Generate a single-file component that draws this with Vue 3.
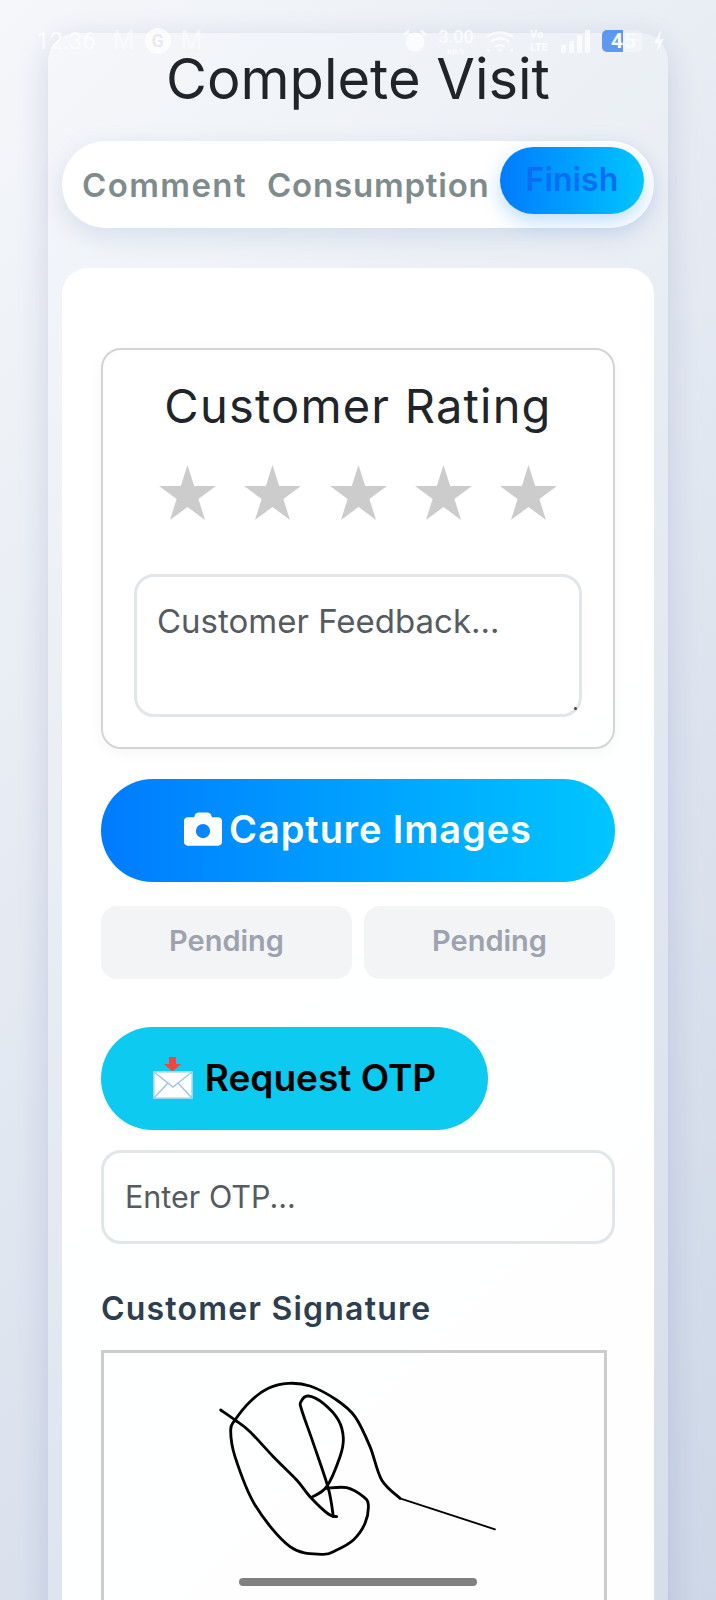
<script setup>
const stars = [1, 2, 3, 4, 5]

const smooth = (pts) => {
  let d = `M${pts[0][0]} ${pts[0][1]}`
  for (let i = 0; i < pts.length - 1; i++) {
    const p0 = pts[i - 1] || pts[i]
    const p1 = pts[i]
    const p2 = pts[i + 1]
    const p3 = pts[i + 2] || p2
    const c1x = p1[0] + (p2[0] - p0[0]) / 6
    const c1y = p1[1] + (p2[1] - p0[1]) / 6
    const c2x = p2[0] - (p3[0] - p1[0]) / 6
    const c2y = p2[1] - (p3[1] - p1[1]) / 6
    d += `C${c1x} ${c1y} ${c2x} ${c2y} ${p2[0]} ${p2[1]}`
  }
  return d
}

const strokes = [
  [[62, 150], [105, 180], [150, 215], [220, 290], [290, 360], [330, 410], [385, 462], [410, 470]],
  [[400, 470], [385, 385], [340, 250], [305, 150], [303, 125], [325, 108], [370, 130], [415, 180], [430, 235], [420, 290], [380, 380], [335, 412]],
  [[380, 385], [440, 383], [490, 410], [505, 435], [495, 490], [460, 540], [410, 570], [365, 583], [270, 560], [165, 435], [105, 290], [92, 210], [105, 180], [150, 125], [205, 85], [265, 70], [330, 78], [410, 120], [465, 170], [510, 260], [545, 360], [600, 415]],
].map(smooth)
</script>

<template>
  <div class="page">
    <div class="status">
      <div class="status-left">
        <span class="time">12:36</span>
        <span class="mail">M</span>
        <span class="g">G</span>
        <span class="mail">M</span>
      </div>
      <div class="status-right">
        <svg class="alarm" viewBox="0 0 24 24" width="24" height="24"><circle cx="12" cy="13" r="9.500" fill="#fff"/><path d="M1 6l5-4.500M23 6l-5-4.500" stroke="#fff" stroke-width="2.400"/></svg>
        <span class="speed"><b>3.00</b><i>KB/S</i></span>
        <svg class="wifi" viewBox="0 0 32 24" width="30" height="24" fill="none" stroke="#fff" stroke-width="2.400"><path d="M2 8c8-7 20-7 28 0M6 13c6-5 14-5 20 0M11 18c3-2 7-2 10 0"/><path d="M2 22h3M14 22h4M27 22h3"/></svg>
        <span class="volte"><b>Vo</b><b>LTE</b></span>
        <span class="signal"><i class="s1"></i><i class="s2"></i><i class="s3"></i><i class="s4"></i></span>
        <span class="battery"><span class="level">4</span><span class="rest">5</span></span>
        <svg class="bolt" viewBox="0 0 12 24" width="14" height="24"><path d="M8 1L1 14h4l-1 9 7-13H7z" fill="#fff"/></svg>
      </div>
    </div>

    <div class="shell">
      <h1 class="title">Complete Visit</h1>
      <nav class="tabs">
        <span class="tab tab-comment">Comment</span>
        <span class="tab tab-consumption">Consumption</span>
        <span class="tab-active">Finish</span>
      </nav>

      <main class="panel">
        <section class="rating">
          <h2>Customer Rating</h2>
          <div class="stars">
            <svg v-for="s in stars" :key="s" viewBox="0 0 57 55" width="57" height="55">
              <polygon points="28.5,0 35.2,21 57,21 39.4,34 46,55 28.5,42 11,55 17.6,34 0,21 21.8,21" fill="#ccc"/>
            </svg>
          </div>
          <div class="feedback">Customer Feedback...<span class="grip"></span></div>
        </section>

        <button class="capture">
          <svg viewBox="0 0 512 512" width="38" height="38"><path fill="#fff" d="M512 144v288c0 26.5-21.5 48-48 48H48c-26.5 0-48-21.5-48-48V144c0-26.5 21.5-48 48-48h88l12.3-32.9c7-18.7 24.9-31.1 44.9-31.1h125.5c20 0 37.9 12.4 44.9 31.1L376 96h88c26.5 0 48 21.5 48 48z"/><circle cx="256" cy="284" r="96" fill="#0a84ff"/></svg>
          <span>Capture Images</span>
        </button>

        <div class="pending">
          <div>Pending</div>
          <div>Pending</div>
        </div>

        <button class="otp">
          <svg viewBox="0 0 40 42" width="40" height="42">
            <path d="M16 0h7v7h5l-8.500 7.500L11 7h5z" fill="#f0473c"/>
            <rect x="1" y="15" width="38" height="26" fill="#fff" stroke="#b9dcf0" stroke-width="1.600"/>
            <path d="M1 15l19 15 19-15M1 41l14-15M39 41L25 26" fill="none" stroke="#9cc8e6" stroke-width="1.500"/>
          </svg>
          <span>Request OTP</span>
        </button>

        <div class="otp-input">Enter OTP...</div>

        <h3 class="sig-label">Customer Signature</h3>
        <div class="sig-box">
          <svg class="sig" viewBox="0 0 960 600" width="320" height="200" fill="none" stroke="#000" stroke-width="8.500" stroke-linejoin="round" stroke-linecap="round">
            <path v-for="(d, i) in strokes" :key="i" :d="d"/>
            <path d="M600 415L885 508" stroke-width="5.500"/>
          </svg>
        </div>
      </main>
    </div>

    <div class="home"></div>
  </div>
</template>

<style>
html, body { margin: 0; padding: 0; }
</style>

<style scoped>
.page {
  position: relative;
  box-sizing: border-box;
  width: 716px;
  height: 1600px;
  overflow: hidden;
  padding: 33px 48px 0;
  background: linear-gradient(135deg, #f5f7fa 0%, #c3cfe2 100%) no-repeat;
  background-size: 716px 2200px;
  font-family: "Inter", "Noto Sans", sans-serif;
}
.status {
  position: absolute;
  top: 26px;
  left: 36px;
  right: 50px;
  height: 30px;
  display: flex;
  align-items: center;
  justify-content: space-between;
  color: #fff;
  opacity: 0.75;
  z-index: 2;
}
.status-left { display: flex; align-items: center; }
.time { font-size: 24px; line-height: 24px; font-family: "Roboto", sans-serif; margin-right: 17px; }
.mail { font-size: 25px; line-height: 24px; font-family: "Roboto", sans-serif; opacity: .7; }
.g {
  width: 26px; height: 26px; margin: 0 10px; border-radius: 50%; background: #fff; color: #e3e7ee;
  display: flex; align-items: center; justify-content: center;
  font: 700 18px/20px "Roboto", sans-serif;
}
.status-right { display: flex; align-items: center; }
.speed { display: flex; flex-direction: column; align-items: center; width: 40px; margin-left: 9px; font-family: "Roboto", sans-serif; }
.speed b { font-size: 18px; line-height: 21px; font-weight: 500; }
.speed i { font-style: normal; font-size: 8px; line-height: 9px; font-weight: 700; }
.wifi { margin-left: 9px; }
.volte { display: flex; flex-direction: column; width: 18px; margin-left: 15px; font: 700 11px/13px "Roboto", sans-serif; }
.signal { display: flex; align-items: flex-end; gap: 3px; height: 24px; margin-left: 13px; }
.signal i { width: 5px; background: #fff; display: block; }
.s1 { height: 8px; } .s2 { height: 12px; } .s3 { height: 18px; } .s4 { height: 23px; }
.battery {
  display: flex; align-items: center; height: 22px; width: 40px; border-radius: 5px;
  background: rgba(255,255,255,.45); margin-left: 12px; overflow: hidden;
  font: 700 21px/22px "Roboto", sans-serif; color: #fff;
}
.level { background: #2f7bf0; height: 22px; width: 21px; text-align: right; }
.rest { padding-left: 1px; }
.bolt { margin-left: 10px; }

.shell {
  box-sizing: border-box;
  width: 620px;
  height: 1700px;
  padding: 20px 14px 0;
  border-radius: 28px;
  background: rgba(255, 255, 255, 0.16);
  box-shadow: 0 8px 32px rgba(31, 38, 135, 0.15);
}
.title {
  margin: 0 0 36px;
  font-size: 56px;
  font-weight: 400;
  line-height: 52px;
  letter-spacing: 0;
  text-align: center;
  color: #212529;
}
.tabs {
  box-sizing: border-box;
  height: 87px;
  display: flex;
  padding: 6px 10px 0 20px;
  border-radius: 44px;
  background: #fff;
  box-shadow: 0 8px 24px rgba(120, 150, 200, 0.22);
}
.tab {
  font-size: 33px;
  font-weight: 600;
  color: #7f8c8d;
  line-height: 76px;
  white-space: nowrap;
}
.tab-comment { width: 185px; letter-spacing: 1.4px; }
.tab-consumption { width: 233px; letter-spacing: 0.8px; }
.tab-active {
  box-sizing: border-box;
  width: 144px;
  height: 67px;
  border-radius: 34px;
  background: linear-gradient(90deg, #007bff, #00c6ff);
  box-shadow: 0 8px 20px rgba(0, 123, 255, 0.25);
  color: #0a6df5;
  font-size: 32px;
  font-weight: 600;
  letter-spacing: 0.1px;
  line-height: 66px;
  text-align: center;
}
.panel {
  box-sizing: border-box;
  margin-top: 40px;
  height: 1400px;
  padding: 80px 39px 0;
  border-radius: 26px;
  background: rgba(255, 255, 255, 0.97);
}
.rating {
  box-sizing: border-box;
  height: 401px;
  padding: 0 31px;
  border: 2px solid #d3d4d6;
  border-radius: 20px;
  box-shadow: 0 4px 14px rgba(0, 0, 0, 0.04);
}
.rating h2 {
  margin: 28px 0 0;
  font-size: 47px;
  font-weight: 400;
  letter-spacing: 1.2px;
  line-height: 56px;
  text-align: center;
  color: #212529;
}
.stars {
  display: flex;
  justify-content: center;
  gap: 28.4px;
  margin-top: 31px;
}
.stars svg { display: block; }
.feedback {
  position: relative;
  box-sizing: border-box;
  height: 143px;
  margin-top: 54px;
  padding: 24px 20px;
  border: 3.500px solid #e0e6ea;
  border-radius: 20px;
  font-size: 33px;
  line-height: 40px;
  color: #555b61;
  white-space: nowrap;
}
.grip {
  position: absolute;
  right: 2px;
  bottom: 4px;
  width: 3px;
  height: 3px;
  border-radius: 50%;
  background: #444;
}
button {
  display: flex;
  align-items: center;
  justify-content: center;
  border: 0;
  padding: 0;
  font-family: inherit;
  font-weight: 600;
}
.capture {
  width: 100%;
  height: 103px;
  margin-top: 30px;
  padding-bottom: 3px;
  gap: 7px;
  border-radius: 52px;
  background: linear-gradient(90deg, #007bff, #00c6ff);
  color: #fff;
  font-size: 38px;
  letter-spacing: 0.9px;
}
.pending {
  display: grid;
  grid-template-columns: 1fr 1fr;
  gap: 12px;
  margin-top: 24px;
}
.pending div {
  height: 73px;
  border-radius: 16px;
  background: #f3f4f6;
  color: #9ca3af;
  font-size: 29px;
  font-weight: 600;
  line-height: 70px;
  text-align: center;
}
.otp {
  width: 387px;
  height: 103px;
  margin-top: 48px;
  padding-bottom: 2px;
  gap: 12px;
  border-radius: 52px;
  background: #0dcaf0;
  color: #000;
  font-size: 37px;
}
.otp-input {
  box-sizing: border-box;
  height: 94px;
  margin-top: 20px;
  padding: 0 21px;
  border: 3.500px solid #e0e6ea;
  border-radius: 20px;
  font-size: 30.500px;
  line-height: 87px;
  color: #555b61;
}
.sig-label {
  margin: 45px 0 0;
  font-size: 32px;
  font-weight: 600;
  letter-spacing: 1.2px;
  line-height: 40px;
  color: #2c3e50;
  white-space: nowrap;
}
.sig-box {
  box-sizing: border-box;
  width: 506px;
  height: 400px;
  margin-top: 21px;
  border: 3px solid #ccc;
}
.sig {
  display: block;
  margin: 7px 0 0 96px;
}
.home {
  position: absolute;
  left: 239px;
  top: 1578px;
  width: 238px;
  height: 8px;
  border-radius: 4px;
  background: #808080;
}
</style>
